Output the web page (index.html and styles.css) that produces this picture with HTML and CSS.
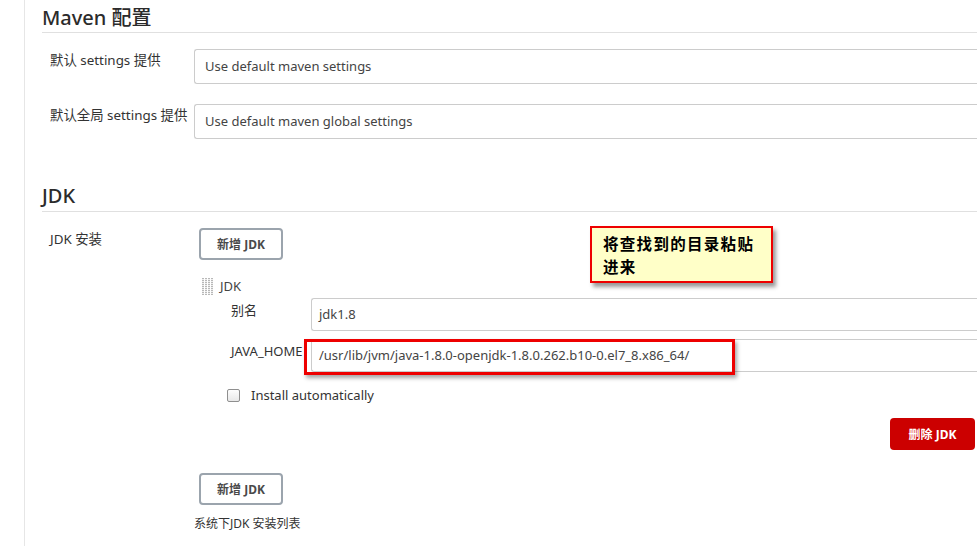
FILE: index.html
```html
<!DOCTYPE html>
<html lang="zh-CN">
<head>
<meta charset="utf-8">
<title>Maven 配置</title>
<link rel="stylesheet" href="styles.css">
</head>
<body>
<div class="page">
  <aside class="side"></aside>
  <main class="main">
    <h2 class="section-title maven-title">Maven 配置</h2>
    <div class="row row-first">
      <div class="label">默认 settings 提供</div>
      <div class="field"><div class="select">Use default maven settings</div></div>
    </div>
    <div class="row row-second">
      <div class="label">默认全局 settings 提供</div>
      <div class="field"><div class="select">Use default maven global settings</div></div>
    </div>

    <h2 class="section-title jdk-title">JDK</h2>
    <div class="row row-jdk">
      <div class="label">JDK 安装</div>
      <div class="field jdk-field">
        <button class="btn btn-add">新增 JDK</button>
        <div class="chunk">
          <div class="chunk-head"><span class="grip"></span><span>JDK</span></div>
          <div class="sub-row sub-alias">
            <div class="sub-label">别名</div>
            <div class="input">jdk1.8</div>
          </div>
          <div class="sub-row sub-home">
            <div class="sub-label">JAVA_HOME</div>
            <div class="input input-home">/usr/lib/jvm/java-1.8.0-openjdk-1.8.0.262.b10-0.el7_8.x86_64/</div>
          </div>
          <label class="check-row"><span class="checkbox"></span><span>Install automatically</span></label>
          <div class="delete-row"><button class="btn btn-delete">删除 JDK</button></div>
        </div>
        <button class="btn btn-add btn-add2">新增 JDK</button>
        <div class="desc">系统下JDK 安装列表</div>
      </div>
    </div>
  </main>

  <div class="highlight-box"></div>
  <div class="note"><div class="note-line">将查找到的目录粘贴</div><div class="note-line">进来</div></div>
</div>
</body>
</html>
```

FILE: styles.css
```css
* { box-sizing: border-box; }
html, body {
  margin: 0;
  padding: 0;
  background: #fff;
  overflow: hidden;
}
body {
  font-family: "Noto Sans", "Noto Sans CJK SC", sans-serif;
  font-size: 13px;
  color: #333;
}
.page {
  position: relative;
  display: flex;
  width: 1017px;
  height: 546px;
}
.side {
  width: 25px;
  flex: none;
  border-right: 1px solid #e6e6e6;
}
.main {
  flex: 1;
  padding-left: 17px;
}
.section-title {
  margin: 0;
  font-size: 20px;
  font-weight: 500;
  color: #2b2b2b;
  line-height: 26px;
  border-bottom: 1px solid #e0e0e0;
}
.maven-title {
  padding-top: 5px;
  height: 33px;
}
.jdk-title {
  margin-top: 40px;
  padding-top: 4px;
  height: 33px;
}
.row {
  display: flex;
  padding-left: 8px;
}
.row-first { margin-top: 16px; }
.row-second { margin-top: 20px; }
.row-jdk { margin-top: 16px; }
.label {
  width: 144px;
  flex: none;
  padding-top: 2px;
  line-height: 18px;
  white-space: nowrap;
  font-size: 13.4px;
}
.field { flex: 1; }
.select {
  height: 35px;
  border: 1px solid #ccc;
  border-right: none;
  border-radius: 3px 0 0 3px;
  padding: 0 10px;
  line-height: 33px;
  color: #444;
}
.btn {
  font-family: "Noto Sans", "Noto Sans CJK SC", sans-serif;
  font-size: 12px;
  font-weight: 700;
  border-radius: 4px;
  cursor: pointer;
}
.btn-add {
  display: block;
  margin-left: 5px;
  width: 84px;
  height: 32px;
  background: #fff;
  border: 2px solid #9ba4ad;
  color: #4a4a4a;
}
.chunk {
  margin-top: 16px;
}
.chunk-head {
  display: flex;
  align-items: center;
  gap: 7px;
  margin-left: 7px;
  height: 20px;
  color: #444;
}
.grip {
  width: 12px;
  height: 17px;
  background:
    linear-gradient(90deg, #fff 1px, transparent 1px) 0 0 / 3px 2px,
    linear-gradient(#b8b8b8 1px, #eee 1px) 0 0 / 3px 2px;
}
.sub-row {
  display: flex;
  align-items: center;
  padding-left: 37px;
}
.sub-alias { margin-top: 2px; }
.sub-home { margin-top: 8px; }
.sub-label {
  width: 80px;
  flex: none;
  margin-top: -10px;
}
.input {
  flex: 1;
  height: 33px;
  border: 1px solid #ccc;
  border-right: none;
  border-radius: 3px 0 0 3px;
  padding: 0 7px;
  line-height: 31px;
  color: #444;
}
.check-row {
  display: flex;
  align-items: center;
  gap: 11px;
  margin-top: 14px;
  margin-left: 33px;
  height: 18px;
  color: #333;
}
.checkbox {
  width: 13px;
  height: 13px;
  border: 1px solid #8f8f8f;
  border-radius: 2px;
  background: linear-gradient(#fdfdfd, #e8e8e8);
}
.delete-row {
  display: flex;
  justify-content: flex-end;
  padding-right: 42px;
  margin-top: 14px;
}
.btn-delete {
  width: 85px;
  height: 32px;
  border: none;
  background: #cc0000;
  color: #fff;
}
.btn-add2 { margin-top: 23px; }
.desc {
  margin-top: 9px;
  font-size: 12px;
  color: #333;
}
.highlight-box {
  position: absolute;
  left: 304px;
  top: 339px;
  width: 431px;
  height: 36px;
  border: 3px solid #ee0000;
  box-shadow: 2px 3px 4px rgba(0,0,0,0.35);
}
.note {
  position: absolute;
  left: 590px;
  top: 226px;
  width: 183px;
  height: 57px;
  background: #ffffc8;
  border: 2px solid #ee0000;
  box-shadow: 3px 4px 4px rgba(0,0,0,0.4);
  padding: 4px 11px 0;
  font-family: "Noto Sans CJK SC", sans-serif;
  font-size: 15.5px;
  letter-spacing: 1.3px;
  font-weight: 700;
  color: #000;
  white-space: nowrap;
}
.note-line {
  height: 22.5px;
  line-height: 22.5px;
}
```
